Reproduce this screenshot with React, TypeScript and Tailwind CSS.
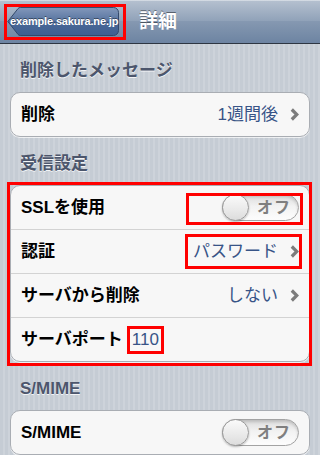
import React from "react";

const FONT = '"Liberation Sans", "Noto Sans CJK JP", sans-serif';

function Chevron() {
  return (
    <svg width="9" height="13" viewBox="0 0 9 13" className="ml-[12px] shrink-0">
      <polyline points="1.8,1.5 6.8,6.5 1.8,11.5" fill="none" stroke="#7c7c7c" strokeWidth="3.2" strokeLinecap="butt" strokeLinejoin="miter" />
    </svg>
  );
}

function Toggle() {
  return (
    <div className="relative w-[77px] h-[27px] rounded-full border border-[#a3a3a3] bg-[linear-gradient(#dcdcdc,#f2f2f2_45%,#fdfdfd)] shadow-[inset_0_2px_3px_rgba(0,0,0,0.15)] flex items-center">
      <div className="absolute left-[-1px] top-[-1px] w-[27px] h-[27px] rounded-full border border-[#9a9a9a] bg-[linear-gradient(#fafafa,#e9e9e9_60%,#dcdcdc)] shadow-[0_1px_2px_rgba(0,0,0,0.25)]" />
      <span className="ml-[34px] text-[16px] font-bold leading-none text-[#7f7f7f] tracking-[1px]">オフ</span>
    </div>
  );
}

function Header({ children }: { children: React.ReactNode }) {
  return (
    <div className="px-[20px] pt-[17px] pb-[11px] text-[17px] leading-[20px] font-bold text-[#4c566c] [text-shadow:0_1px_0_rgba(255,255,255,0.8)]">
      {children}
    </div>
  );
}

function Row({ first, children }: { first?: boolean; children: React.ReactNode }) {
  return (
    <div className={first ? "relative h-[43px] flex items-center pl-[10px] pr-[10px]" : "relative h-[44px] flex items-center pl-[10px] pr-[10px] border-t border-[#d3d3d3]"}>
      {children}
    </div>
  );
}

function Label({ children }: { children: React.ReactNode }) {
  return <span className="text-[17px] font-bold text-black leading-none">{children}</span>;
}

function Value({ children }: { children: React.ReactNode }) {
  return <span className="text-[17px] text-[#385487] leading-none">{children}</span>;
}

export default function App() {
  return (
    <div
      className="w-[320px] h-[455px] overflow-hidden bg-[repeating-linear-gradient(90deg,#c5ccd4_0px,#c5ccd4_3px,#cdd3da_3px,#cdd3da_5px)]"
      style={{ fontFamily: FONT }}
    >
      {/* Navigation bar */}
      <div className="relative h-[44px] flex items-center border-b border-[#2d3642] bg-[linear-gradient(#b6c1d0,#8fa1b8_50%,#8598b1_50%,#6d84a2)] shadow-[inset_0_1px_0_rgba(255,255,255,0.4)]">
        <div className="relative ml-[7px] w-[112px] h-[29px] flex items-center">
          <svg className="absolute inset-0" width="112" height="29" viewBox="0 0 112 29">
            <defs>
              <linearGradient id="bb" x1="0" y1="0" x2="0" y2="1">
                <stop offset="0" stopColor="#8398bb" />
                <stop offset="0.5" stopColor="#56739f" />
                <stop offset="0.5" stopColor="#4a6897" />
                <stop offset="1" stopColor="#3f5f91" />
              </linearGradient>
            </defs>
            <path
              d="M0.8,14.5 L11,1.6 Q11.8,0.5 13.2,0.5 H106.5 A5,5 0 0 1 111.5,5.5 V23.5 A5,5 0 0 1 106.5,28.5 H13.2 Q11.8,28.5 11,27.4 Z"
              fill="url(#bb)"
              stroke="#34496b"
              strokeWidth="1"
            />
          </svg>
          <span className="relative ml-[3px] text-[11px] font-bold text-white leading-none tracking-[-0.15px] whitespace-nowrap [text-shadow:0_-1px_0_rgba(0,0,0,0.45)]">
            example.sakura.ne.jp
          </span>
        </div>
        <div className="ml-[20px] text-[19px] font-bold text-white leading-none [text-shadow:0_-1px_0_rgba(0,0,0,0.45)]">
          詳細
        </div>
        <div className="absolute left-[4px] top-[4px] w-[122px] h-[36px] border-[3px] border-[#ff0000]" />
      </div>

      <Header>削除したメッセージ</Header>
      <div className="mx-[10px] rounded-[10px] border border-[#a9adb3] bg-[#f7f7f7] shadow-[0_1px_0_rgba(255,255,255,0.7)]">
        <Row first>
          <Label>削除</Label>
          <div className="ml-auto flex items-center">
            <Value>1週間後</Value>
            <Chevron />
          </div>
        </Row>
      </div>

      <Header>受信設定</Header>
      <div className="relative mx-[10px] rounded-[10px] border border-[#a9adb3] bg-[#f7f7f7] shadow-[0_1px_0_rgba(255,255,255,0.7)]">
        <Row first>
          <Label>SSLを使用</Label>
          <div className="ml-auto">
            <Toggle />
          </div>
          <div className="absolute right-[6px] top-[7px] w-[117px] h-[32px] border-[3px] border-[#ff0000]" />
        </Row>
        <Row>
          <Label>認証</Label>
          <div className="ml-auto flex items-center">
            <Value>パスワード</Value>
            <Chevron />
          </div>
          <div className="absolute right-[7px] top-[4px] w-[117px] h-[35px] border-[3px] border-[#ff0000]" />
        </Row>
        <Row>
          <Label>サーバから削除</Label>
          <div className="ml-auto flex items-center">
            <Value>しない</Value>
            <Chevron />
          </div>
        </Row>
        <Row>
          <Label>サーバポート</Label>
          <span className="ml-[4px] h-[28px] flex items-center border-[3px] border-[#ff0000] px-[2px]">
            <Value>110</Value>
          </span>
        </Row>
        <div className="absolute left-[-4px] top-[-4px] right-[-3px] bottom-[-5px] border-[3px] border-[#ff0000]" />
      </div>

      <Header>S/MIME</Header>
      <div className="mx-[10px] rounded-[10px] border border-[#a9adb3] bg-[#f7f7f7] shadow-[0_1px_0_rgba(255,255,255,0.7)]">
        <Row first>
          <Label>S/MIME</Label>
          <div className="ml-auto">
            <Toggle />
          </div>
        </Row>
      </div>
    </div>
  );
}
